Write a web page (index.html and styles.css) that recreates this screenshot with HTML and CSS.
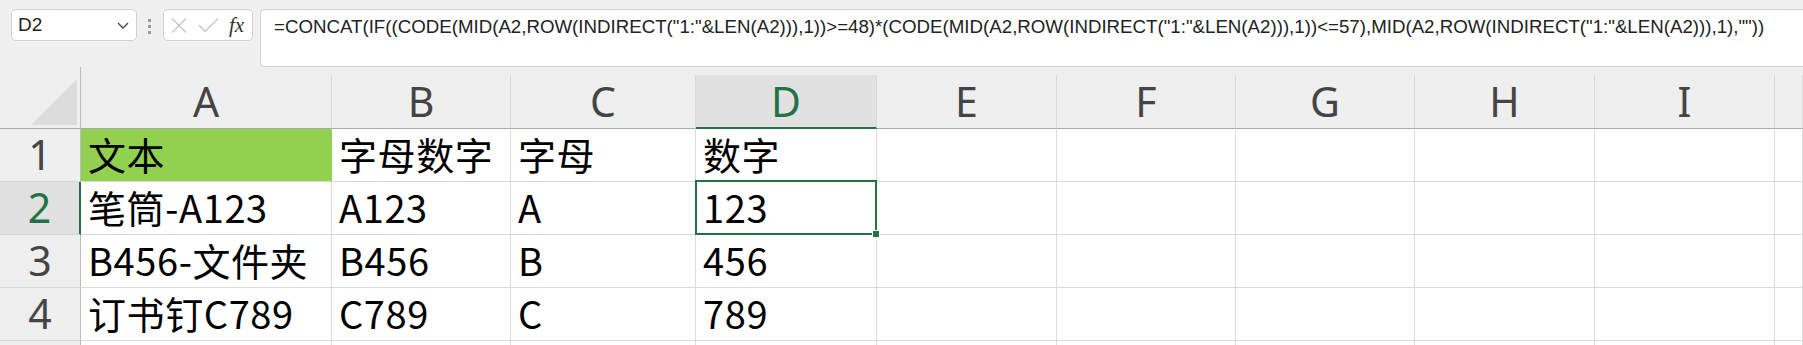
FILE: index.html
```html
<!DOCTYPE html>
<html lang="zh-CN">
<head>
    <meta charset="UTF-8">
    <title>Sheet1</title>
    <link rel="stylesheet" href="styles.css">
</head>
<body>
    <div class="toolbar">
        <div class="name-box">
            <span>D2</span>
            <svg class="chevron" width="12" height="7" viewBox="0 0 12 7"><polyline points="1,1 6,6 11,1" fill="none" stroke="#444" stroke-width="1.3"/></svg>
        </div>
        <div class="grip"><i></i><i></i><i></i></div>
        <div class="fx-box">
            <svg width="16" height="15" viewBox="0 0 16 15"><path d="M1 0.5 L15 14.5 M15 0.5 L1 14.5" stroke="#c4c4c4" stroke-width="1.3"/></svg>
            <svg width="21" height="15" viewBox="0 0 21 15"><polyline points="1,7 7,13.5 20,0.5" fill="none" stroke="#c4c4c4" stroke-width="1.3"/></svg>
            <span class="fx">fx</span>
        </div>
        <div class="formula-bar">=CONCAT(IF((CODE(MID(A2,ROW(INDIRECT("1:"&amp;LEN(A2))),1))&gt;=48)*(CODE(MID(A2,ROW(INDIRECT("1:"&amp;LEN(A2))),1))&lt;=57),MID(A2,ROW(INDIRECT("1:"&amp;LEN(A2))),1),""))</div>
    </div>

    <div class="sheet">
        <div class="corner"><svg width="47" height="47" viewBox="0 0 47 47"><polygon points="46,0 46,46 0,46" fill="#dcdcdc"/></svg></div>
        <div class="col-head">A</div>
        <div class="col-head">B</div>
        <div class="col-head">C</div>
        <div class="col-head active">D</div>
        <div class="col-head">E</div>
        <div class="col-head">F</div>
        <div class="col-head">G</div>
        <div class="col-head">H</div>
        <div class="col-head">I</div>
        <div class="col-head"></div>

        <div class="row-head">1</div>
        <div class="cell fill">文本</div>
        <div class="cell">字母数字</div>
        <div class="cell">字母</div>
        <div class="cell">数字</div>
        <div class="cell"></div><div class="cell"></div><div class="cell"></div><div class="cell"></div><div class="cell"></div><div class="cell"></div>

        <div class="row-head active">2</div>
        <div class="cell">笔筒-A123</div>
        <div class="cell">A123</div>
        <div class="cell">A</div>
        <div class="cell selected">123</div>
        <div class="cell"></div><div class="cell"></div><div class="cell"></div><div class="cell"></div><div class="cell"></div><div class="cell"></div>

        <div class="row-head">3</div>
        <div class="cell">B456-文件夹</div>
        <div class="cell">B456</div>
        <div class="cell">B</div>
        <div class="cell">456</div>
        <div class="cell"></div><div class="cell"></div><div class="cell"></div><div class="cell"></div><div class="cell"></div><div class="cell"></div>

        <div class="row-head">4</div>
        <div class="cell">订书钉C789</div>
        <div class="cell">C789</div>
        <div class="cell">C</div>
        <div class="cell">789</div>
        <div class="cell"></div><div class="cell"></div><div class="cell"></div><div class="cell"></div><div class="cell"></div><div class="cell"></div>

        <div class="row-head short"></div>
        <div class="cell short"></div><div class="cell short"></div><div class="cell short"></div><div class="cell short"></div><div class="cell short"></div>
        <div class="cell short"></div><div class="cell short"></div><div class="cell short"></div><div class="cell short"></div><div class="cell short"></div>
    </div>
</body>
</html>
```

FILE: styles.css
```css
* {
    box-sizing: border-box;
}
body {
    margin: 0;
    background-color: #f0f0f0;
    overflow: hidden;
    font-family: "Noto Sans", "Noto Sans CJK SC", sans-serif;
}
.toolbar {
    display: flex;
    align-items: flex-start;
    height: 67px;
    padding: 9px 0 0 11px;
}
.name-box {
    display: flex;
    align-items: center;
    justify-content: space-between;
    width: 126px;
    height: 32px;
    padding: 0 7px 0 6px;
    background-color: white;
    border: 1px solid #d1d1d1;
    border-radius: 5px;
    font-family: "Liberation Sans", Arial, sans-serif;
    font-size: 19px;
    color: #222;
}
.grip {
    display: flex;
    flex-direction: column;
    gap: 3px;
    margin: 10px 12px 0 11px;
}
.grip i {
    width: 3px;
    height: 3px;
    background-color: #999;
}
.fx-box {
    display: flex;
    align-items: center;
    gap: 11px;
    width: 90px;
    height: 32px;
    padding-left: 7px;
    background-color: white;
    border: 1px solid #d1d1d1;
    border-radius: 5px;
}
.fx {
    font-family: "Liberation Serif", "Times New Roman", serif;
    font-style: italic;
    font-size: 21px;
    color: #333;
    margin-left: -1px;
}
.formula-bar {
    flex: 1;
    height: 58px;
    margin-left: 7px;
    padding: 8px 0 0 13px;
    background-color: white;
    border: 1px solid #d1d1d1;
    border-right: none;
    border-radius: 5px 0 0 5px;
    font-family: "Liberation Sans", Arial, sans-serif;
    font-size: 18.7px;
    line-height: 1;
    color: #222;
    white-space: nowrap;
    overflow: hidden;
}
.sheet {
    display: grid;
    grid-template-columns: 81px 251px 179px 185px 181px 180px 179px 179px 180px 180px 1fr;
    background-color: #efefef;
}
.corner {
    height: 62px;
    padding: 12px 0 0 31px;
    border-right: 1px solid #bdbdbd;
    border-bottom: 1px solid #a9a9a9;
}
.corner svg {
    display: block;
}
.col-head {
    display: flex;
    align-items: flex-end;
    justify-content: center;
    height: 54px;
    margin-top: 8px;
    padding-bottom: 6px;
    border-right: 1px solid #d9d9d9;
    border-bottom: 1px solid #a9a9a9;
    font-size: 41px;
    line-height: 1;
    color: #444;
}
.col-head.active {
    background-color: #e1e1e1;
    border-bottom: 2px solid #217346;
    padding-bottom: 5px;
    color: #217346;
}
.row-head {
    display: flex;
    align-items: flex-end;
    justify-content: center;
    height: 53px;
    padding-bottom: 6px;
    border-right: 1px solid #bdbdbd;
    border-bottom: 1px solid #d6d6d6;
    font-size: 41px;
    line-height: 1;
    color: #444;
}
.row-head.active {
    background-color: #e1e1e1;
    border-right: 2px solid #217346;
    color: #217346;
}
.cell {
    display: flex;
    align-items: flex-end;
    height: 53px;
    padding: 0 0 8px 7px;
    background-color: white;
    border-right: 1px solid #dadada;
    border-bottom: 1px solid #dadada;
    font-family: "Noto Sans CJK SC", sans-serif;
    font-size: 38px;
    line-height: 1;
    letter-spacing: 0.6px;
    color: #000;
    white-space: nowrap;
}
.row-head.short,
.cell.short {
    height: 4px;
    padding: 0;
    border-bottom: none;
}
.cell.fill {
    background-color: #92d050;
    border-right-color: #92d050;
}
.cell.selected {
    position: relative;
}
.cell.selected::after {
    content: "";
    position: absolute;
    top: -2px;
    left: -1px;
    right: -1px;
    bottom: -1px;
    border: 2px solid #217346;
}
.cell.selected::before {
    content: "";
    position: absolute;
    right: -4px;
    bottom: -4px;
    width: 6px;
    height: 6px;
    background-color: #217346;
    border: 1px solid white;
    z-index: 1;
}
```
